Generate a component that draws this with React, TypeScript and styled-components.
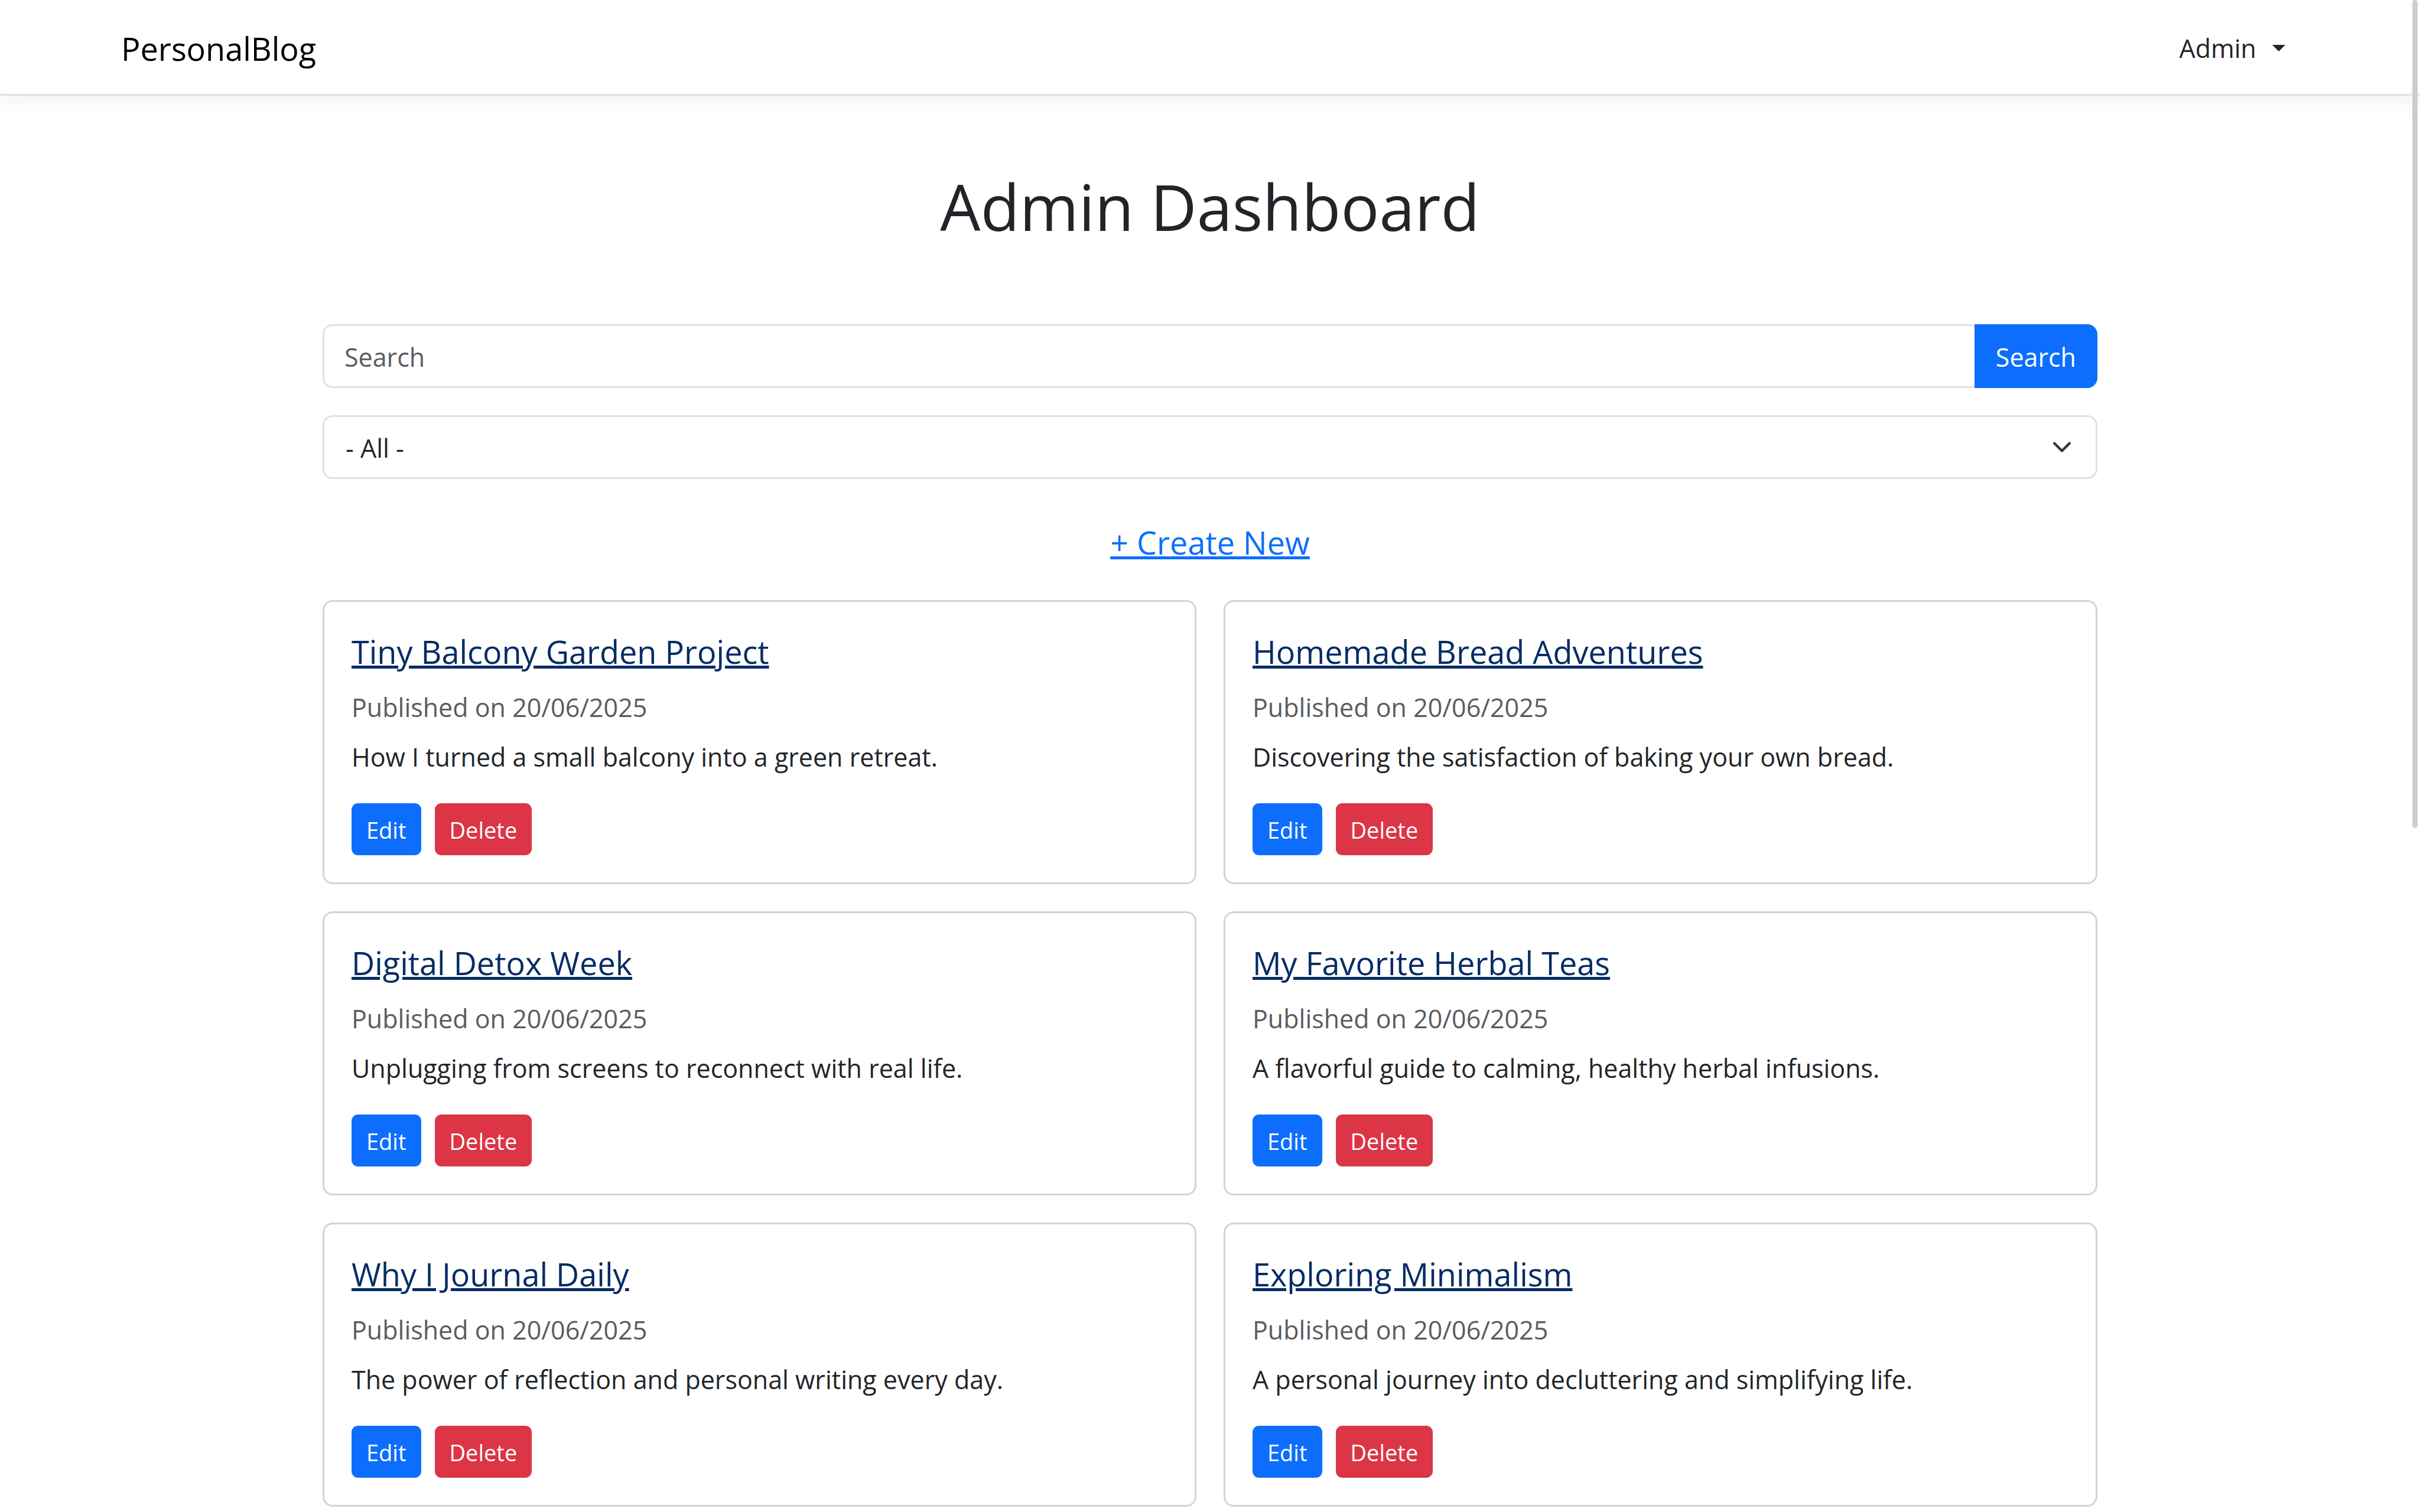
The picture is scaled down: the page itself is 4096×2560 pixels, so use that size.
import React from "react";
import styled, { createGlobalStyle } from "styled-components";

const GlobalStyle = createGlobalStyle`
  *, *::before, *::after { box-sizing: border-box; }
  html { scrollbar-width: none; }
  body {
    margin: 0;
    background: #fff;
    color: #212529;
    font-family: "Segoe UI", "Open Sans", sans-serif;
    font-size: 43px;
    line-height: 68px;
  }
`;

const Header = styled.header`
  background: #fff;
  border-bottom: 3px solid #dee2e6;
  box-shadow: 0 11px 34px rgba(0, 0, 0, 0.05);
`;

const Nav = styled.nav`
  display: flex;
  align-items: center;
  justify-content: space-between;
  max-width: 3686px;
  height: 159px;
  margin: 0 auto;
  padding-top: 4px;
`;

const Brand = styled.a`
  color: #000;
  font-size: 54px;
  line-height: 86px;
  text-decoration: none;
`;

const UserMenu = styled.button`
  display: flex;
  align-items: center;
  gap: 27px;
  padding: 0 23px;
  border: 0;
  background: none;
  color: inherit;
  font: inherit;

  &::after {
    content: "";
    border: 11px solid transparent;
    border-top-color: currentColor;
    border-bottom: 0;
  }
`;

const Main = styled.main`
  display: flex;
  flex-direction: column;
  max-width: 3004px;
  margin: 0 auto;
  padding: 120px 0 46px;
`;

const Title = styled.h1`
  margin: 0 0 131px;
  font-size: 108px;
  font-weight: 400;
  line-height: 136px;
  text-align: center;
`;

const SearchForm = styled.form`
  display: flex;
  height: 108px;
  margin-bottom: 46px;
`;

const SearchInput = styled.input`
  flex: 1;
  min-width: 0;
  padding: 3px 34px 0;
  border: 3px solid #dee2e6;
  border-right: 0;
  border-radius: 17px 0 0 17px;
  background: #fff;
  color: inherit;
  font: inherit;

  &::placeholder {
    color: #595c5f;
    opacity: 1;
  }
`;

const SearchButton = styled.button`
  padding: 3px 36px 0;
  border: 0;
  border-radius: 0 17px 17px 0;
  background: #0d6efd;
  color: #fff;
  font: inherit;
`;

const FilterField = styled.div`
  display: grid;
  align-items: center;

  > * {
    grid-area: 1 / 1;
  }

  svg {
    justify-self: end;
    width: 34px;
    height: 34px;
    margin-right: 43px;
    pointer-events: none;
  }
`;

const FilterSelect = styled.select`
  appearance: none;
  width: 100%;
  height: 108px;
  padding: 3px 36px 0;
  border: 3px solid #dee2e6;
  border-radius: 17px;
  background: #fff;
  color: inherit;
  font: inherit;
`;

const CreateLink = styled.a`
  align-self: center;
  margin: 64px 0 55px;
  color: #0d6efd;
  font-size: 54px;
  line-height: 86px;
`;

const PostGrid = styled.div`
  display: grid;
  grid-template-columns: 1fr 1fr;
  gap: 46px;
`;

const Card = styled.article`
  padding: 46px;
  border: 3px solid #d3d3d3;
  border-radius: 17px;
  background: #fff;
`;

const CardTitle = styled.h2`
  margin: 0 0 23px;
  font-size: 54px;
  font-weight: 400;
  line-height: 76px;

  a {
    color: #052c65;
  }
`;

const CardDate = styled.p`
  margin: 0 0 16px;
  color: #595c5f;
`;

const CardText = styled.p`
  margin: 0 0 44px;
`;

const Actions = styled.div`
  display: flex;
  gap: 23px;
`;

const ActionButton = styled.button<{ $danger?: boolean }>`
  height: 88px;
  padding: 2px 25px 0;
  border: 0;
  border-radius: 11px;
  background: ${(p) => (p.$danger ? "#dc3545" : "#0d6efd")};
  color: #fff;
  font: inherit;
  font-size: 38px;
`;

const ScrollThumb = styled.div`
  position: fixed;
  top: 0;
  right: 4px;
  width: 9px;
  height: 1402px;
  border-radius: 5px;
  background: #cdcdcd;
`;

const posts = [
  { title: "Tiny Balcony Garden Project", text: "How I turned a small balcony into a green retreat." },
  { title: "Homemade Bread Adventures", text: "Discovering the satisfaction of baking your own bread." },
  { title: "Digital Detox Week", text: "Unplugging from screens to reconnect with real life." },
  { title: "My Favorite Herbal Teas", text: "A flavorful guide to calming, healthy herbal infusions." },
  { title: "Why I Journal Daily", text: "The power of reflection and personal writing every day." },
  { title: "Exploring Minimalism", text: "A personal journey into decluttering and simplifying life." },
];

export default function App() {
  return (
    <>
      <GlobalStyle />
      <Header>
        <Nav>
          <Brand href="#">PersonalBlog</Brand>
          <UserMenu type="button" aria-haspopup="menu">Admin</UserMenu>
        </Nav>
      </Header>
      <Main>
        <Title>Admin Dashboard</Title>
        <SearchForm role="search" onSubmit={(e) => e.preventDefault()}>
          <SearchInput type="search" placeholder="Search" aria-label="Search" />
          <SearchButton type="submit">Search</SearchButton>
        </SearchForm>
        <FilterField>
          <FilterSelect aria-label="Filter posts">
            <option>- All -</option>
          </FilterSelect>
          <svg viewBox="0 0 16 16" fill="none" stroke="#343a40" strokeWidth="2" strokeLinecap="round" strokeLinejoin="round" aria-hidden="true">
            <path d="m2 5 6 6 6-6" />
          </svg>
        </FilterField>
        <CreateLink href="#">+ Create New</CreateLink>
        <PostGrid>
          {posts.map((post) => (
            <Card key={post.title}>
              <CardTitle>
                <a href="#">{post.title}</a>
              </CardTitle>
              <CardDate>Published on 20/06/2025</CardDate>
              <CardText>{post.text}</CardText>
              <Actions>
                <ActionButton type="button">Edit</ActionButton>
                <ActionButton type="button" $danger>Delete</ActionButton>
              </Actions>
            </Card>
          ))}
        </PostGrid>
      </Main>
      <ScrollThumb />
    </>
  );
}
